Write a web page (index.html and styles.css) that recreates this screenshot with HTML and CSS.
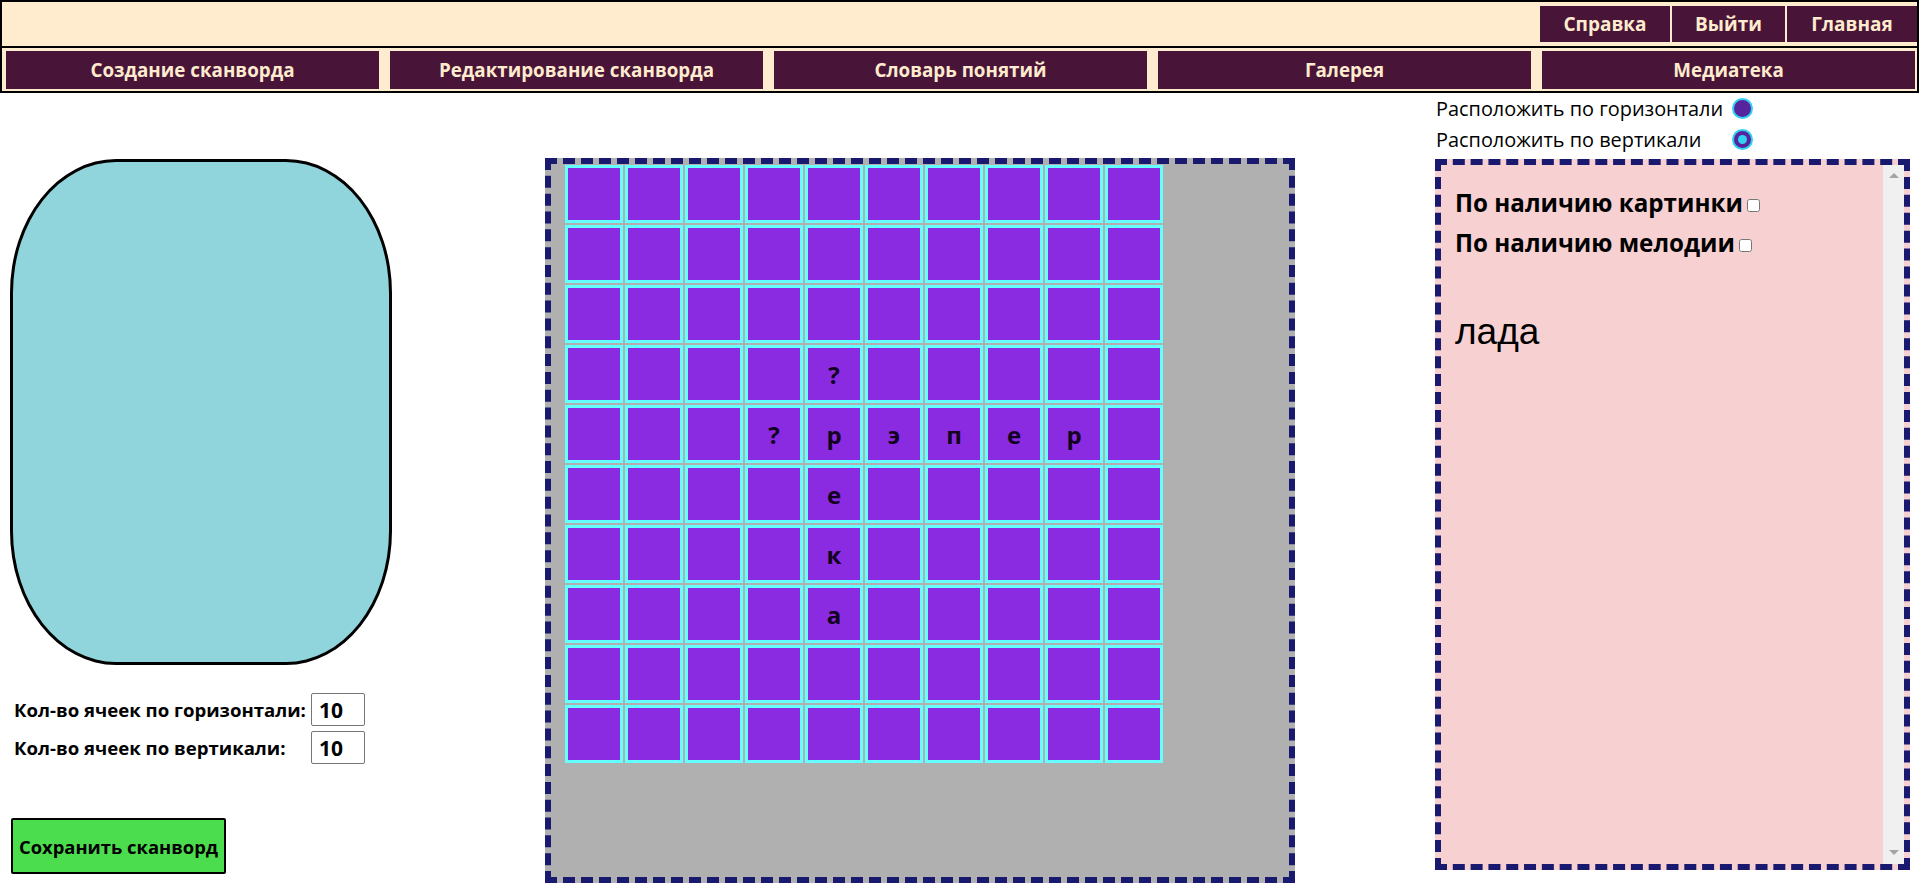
FILE: index.html
```html
<!DOCTYPE html>
<html lang="ru">
<head>
<meta charset="utf-8">
<title>Создание сканворда</title>
<link rel="stylesheet" href="styles.css">
</head>
<body>
<header class="header">
  <div class="topbar">
    <a class="btn top-btn" href="#">Справка</a>
    <a class="btn top-btn top-btn-narrow" href="#">Выйти</a>
    <a class="btn top-btn" href="#">Главная</a>
  </div>
  <nav class="nav">
    <a class="btn nav-btn" href="#">Создание сканворда</a>
    <a class="btn nav-btn" href="#">Редактирование сканворда</a>
    <a class="btn nav-btn" href="#">Словарь понятий</a>
    <a class="btn nav-btn" href="#">Галерея</a>
    <a class="btn nav-btn" href="#">Медиатека</a>
  </nav>
</header>
<main class="main">
  <section class="left">
    <div class="oval"></div>
    <div class="sizes">
      <label class="size-label" for="w">Кол-во ячеек по горизонтали:</label>
      <input class="size-input" id="w" type="text" value="10">
      <label class="size-label" for="h">Кол-во ячеек по вертикали:</label>
      <input class="size-input" id="h" type="text" value="10">
    </div>
    <button class="save" type="button">Сохранить сканворд</button>
  </section>
  <section class="board">
    <div class="grid">
      <div class="cell"></div><div class="cell"></div><div class="cell"></div><div class="cell"></div><div class="cell"></div><div class="cell"></div><div class="cell"></div><div class="cell"></div><div class="cell"></div><div class="cell"></div>
      <div class="cell"></div><div class="cell"></div><div class="cell"></div><div class="cell"></div><div class="cell"></div><div class="cell"></div><div class="cell"></div><div class="cell"></div><div class="cell"></div><div class="cell"></div>
      <div class="cell"></div><div class="cell"></div><div class="cell"></div><div class="cell"></div><div class="cell"></div><div class="cell"></div><div class="cell"></div><div class="cell"></div><div class="cell"></div><div class="cell"></div>
      <div class="cell"></div><div class="cell"></div><div class="cell"></div><div class="cell"></div><div class="cell">?</div><div class="cell"></div><div class="cell"></div><div class="cell"></div><div class="cell"></div><div class="cell"></div>
      <div class="cell"></div><div class="cell"></div><div class="cell"></div><div class="cell">?</div><div class="cell">р</div><div class="cell">э</div><div class="cell">п</div><div class="cell">е</div><div class="cell">р</div><div class="cell"></div>
      <div class="cell"></div><div class="cell"></div><div class="cell"></div><div class="cell"></div><div class="cell">е</div><div class="cell"></div><div class="cell"></div><div class="cell"></div><div class="cell"></div><div class="cell"></div>
      <div class="cell"></div><div class="cell"></div><div class="cell"></div><div class="cell"></div><div class="cell">к</div><div class="cell"></div><div class="cell"></div><div class="cell"></div><div class="cell"></div><div class="cell"></div>
      <div class="cell"></div><div class="cell"></div><div class="cell"></div><div class="cell"></div><div class="cell">а</div><div class="cell"></div><div class="cell"></div><div class="cell"></div><div class="cell"></div><div class="cell"></div>
      <div class="cell"></div><div class="cell"></div><div class="cell"></div><div class="cell"></div><div class="cell"></div><div class="cell"></div><div class="cell"></div><div class="cell"></div><div class="cell"></div><div class="cell"></div>
      <div class="cell"></div><div class="cell"></div><div class="cell"></div><div class="cell"></div><div class="cell"></div><div class="cell"></div><div class="cell"></div><div class="cell"></div><div class="cell"></div><div class="cell"></div>
    </div>
  </section>
  <section class="right">
    <div class="orient">
      <span class="orient-label">Расположить по горизонтали</span>
      <span class="radio"></span>
      <span class="orient-label">Расположить по вертикали</span>
      <span class="radio radio-on"></span>
    </div>
    <div class="pane">
      <div class="pane-content">
        <div class="filter">По наличию картинки<input class="check" type="checkbox"></div>
        <div class="filter">По наличию мелодии<input class="check" type="checkbox"></div>
        <div class="word">лада</div>
      </div>
      <div class="scrollbar" aria-hidden="true">
        <span class="arrow arrow-up"></span>
        <span class="arrow arrow-down"></span>
      </div>
    </div>
  </section>
</main>
</body>
</html>
```

FILE: styles.css
```css
* { box-sizing: border-box; }

body {
  margin: 0;
  background: #ffffff;
  font-family: "Open Sans", "Noto Sans", sans-serif;
  color: #000;
}

.header {
  background: #ffebcd;
  border: 2px solid #000;
}

.btn {
  display: flex;
  align-items: center;
  justify-content: center;
  background: #481438;
  color: #ffebcd;
  font-weight: 700;
  font-size: 19px;
  text-decoration: none;
}

.topbar {
  display: flex;
  justify-content: flex-end;
  gap: 2px;
  padding: 4px 0;
  border-bottom: 2px solid #000;
}

.top-btn {
  height: 36px;
  width: 130px;
}

.top-btn-narrow {
  width: 113px;
}

.nav {
  display: flex;
  gap: 11px;
  padding: 3px 2px 2px 4px;
}

.nav-btn {
  flex: 1;
  height: 38px;
  font-size: 18.8px;
}

.main {
  display: flex;
  align-items: flex-start;
}

.left {
  width: 545px;
  padding-left: 10px;
  padding-top: 66px;
}

.oval {
  width: 382px;
  height: 506px;
  background: #91d5dc;
  border: 3px solid #000;
  border-radius: 106px / 134px;
}

.sizes {
  display: grid;
  grid-template-columns: auto 54px;
  column-gap: 5px;
  row-gap: 5px;
  align-items: center;
  margin: 28px 0 0 4px;
  width: max-content;
}

.size-label {
  font-size: 18.6px;
  font-weight: 700;
}

.size-input {
  width: 54px;
  height: 33px;
  border: 1px solid #767676;
  border-radius: 2px;
  padding: 0 7px;
  font-family: "Open Sans", sans-serif;
  font-size: 21px;
  font-weight: 700;
  color: #000;
  background: #fff;
}

.save {
  margin-top: 54px;
  margin-left: 1px;
  width: 215px;
  height: 56px;
  background: #4cdd4e;
  border: 2px solid #000;
  border-radius: 2px;
  font-family: "Open Sans", sans-serif;
  font-size: 18.4px;
  font-weight: 700;
  color: #000;
  padding: 0;
}

.board {
  width: 750px;
  height: 725px;
  margin-top: 65px;
  background: #b0b0b0;
  border: 6px dashed #191970;
  padding: 1px 0 0 14px;
}

.grid {
  display: grid;
  grid-template-columns: repeat(10, 58px);
  grid-auto-rows: 58px;
  gap: 2px;
}

.cell {
  background: #8a2be2;
  border: 3px solid #66ffff;
  display: flex;
  align-items: center;
  justify-content: center;
  font-size: 24px;
  font-weight: 700;
  color: #120020;
}

.right {
  width: 475px;
  margin-left: 140px;
}

.orient {
  display: grid;
  grid-template-columns: max-content 21px;
  column-gap: 9px;
  grid-auto-rows: 31px;
  align-items: center;
  margin-left: 1px;
}

.orient-label {
  font-size: 19.9px;
}

.radio {
  width: 21px;
  height: 21px;
  border-radius: 50%;
  background: #56249c;
  border: 2px solid #2fd0f2;
  display: flex;
  align-items: center;
  justify-content: center;
}

.radio-on::after {
  content: "";
  width: 9px;
  height: 9px;
  border-radius: 50%;
  background: #30d2f4;
}

.pane {
  display: flex;
  margin-top: 4px;
  height: 711px;
  background: #f7d1d1;
  border: 6px dashed #191970;
}

.pane-content {
  flex: 1;
  padding: 18px 14px 0 14px;
}

.filter {
  display: flex;
  align-items: center;
  font-size: 24.2px;
  font-weight: 700;
  line-height: 40px;
}

.check {
  width: 13px;
  height: 13px;
  margin: 4px 0 0 4px;
}

.word {
  margin-top: 48px;
  font-family: "Liberation Sans", Arial, sans-serif;
  font-size: 37px;
  line-height: normal;
}

.scrollbar {
  width: 21px;
  background: #f0f0f0;
  display: flex;
  flex-direction: column;
  justify-content: space-between;
  align-items: center;
  padding: 8px 0 9px;
}

.arrow {
  width: 0;
  height: 0;
  border-left: 5px solid transparent;
  border-right: 5px solid transparent;
}

.arrow-up { border-bottom: 5px solid #a3a3a3; }
.arrow-down { border-top: 5px solid #a3a3a3; }
```
